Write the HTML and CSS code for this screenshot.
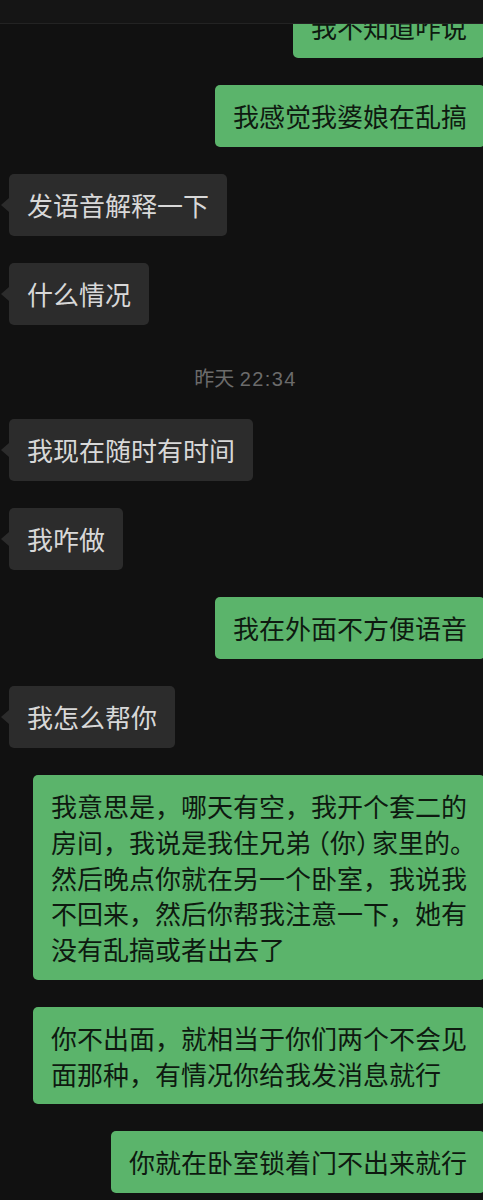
FILE: index.html
```html
<!DOCTYPE html>
<html lang="zh-CN">
<head>
<meta charset="utf-8">
<title>聊天</title>
<link rel="stylesheet" href="styles.css">
</head>
<body>
<div class="screen">
  <div class="topbar"></div>
  <div class="chat">
    <div class="msg out"><div class="bubble">我不知道咋说</div></div>
    <div class="msg out"><div class="bubble">我感觉我婆娘在乱搞</div></div>
    <div class="msg in"><div class="bubble">发语音解释一下</div></div>
    <div class="msg in"><div class="bubble">什么情况</div></div>
    <div class="time">昨天 <span class="clock">22:34</span></div>
    <div class="msg in"><div class="bubble">我现在随时有时间</div></div>
    <div class="msg in"><div class="bubble">我咋做</div></div>
    <div class="msg out"><div class="bubble">我在外面不方便语音</div></div>
    <div class="msg in"><div class="bubble">我怎么帮你</div></div>
    <div class="msg out"><div class="bubble multi">我意思是，哪天有空，我开个套二的<br>房间，我说是我住兄弟<span class="po">（</span>你<span class="pc">）</span>家里的。<br>然后晚点你就在另一个卧室，我说我<br>不回来，然后你帮我注意一下，她有<br>没有乱搞或者出去了</div></div>
    <div class="msg out"><div class="bubble multi">你不出面，就相当于你们两个不会见<br>面那种，有情况你给我发消息就行</div></div>
    <div class="msg out"><div class="bubble">你就在卧室锁着门不出来就行</div></div>
  </div>
</div>
</body>
</html>
```
FILE: styles.css
```css
html, body {
  margin: 0;
  padding: 0;
  background: #111111;
  overflow: hidden;
}

.screen {
  position: relative;
  width: 483px;
  height: 1200px;
  overflow: hidden;
  font-family: "Noto Sans CJK SC", "Noto Sans", sans-serif;
}

.topbar {
  position: absolute;
  top: 0;
  left: 0;
  right: 0;
  height: 23px;
  background: #151515;
  border-bottom: 1px solid #232323;
  z-index: 2;
}

.chat {
  display: flex;
  flex-direction: column;
  gap: 26.9px;
  margin-top: -4px;
  margin-right: -2px;
  width: 485px;
}

.msg {
  display: flex;
  position: relative;
}

.msg.out {
  justify-content: flex-end;
}

.msg.in {
  justify-content: flex-start;
  padding-left: 9px;
}

.bubble {
  box-sizing: border-box;
  max-width: 452px;
  padding: 13px 18px;
  font-size: 26px;
  line-height: 36px;
  border-radius: 5px;
  position: relative;
}

.msg.out .bubble {
  background: #5bb46b;
  color: #0e1a10;
}

.msg.in .bubble {
  background: #2c2c2c;
  color: #d8d8d8;
}

.msg.in .bubble::before {
  content: "";
  position: absolute;
  left: -8px;
  top: 24px;
  border-style: solid;
  border-width: 7px 8px 7px 0;
  border-color: transparent #2c2c2c transparent transparent;
}

.bubble.multi {
  white-space: nowrap;
  line-height: 35.8px;
}

.po, .pc {
  font-feature-settings: "halt";
}

.po {
  margin-left: 6px;
}

.pc {
  margin-right: 3px;
}

.time {
  margin: 15px 0 2px;
  padding-left: 6px;
  text-align: center;
  font-family: "Liberation Sans", "Noto Sans CJK SC", sans-serif;
  font-size: 20px;
  line-height: 24px;
  color: #6b6b6b;
}

.clock {
  letter-spacing: 1.4px;
}
```
